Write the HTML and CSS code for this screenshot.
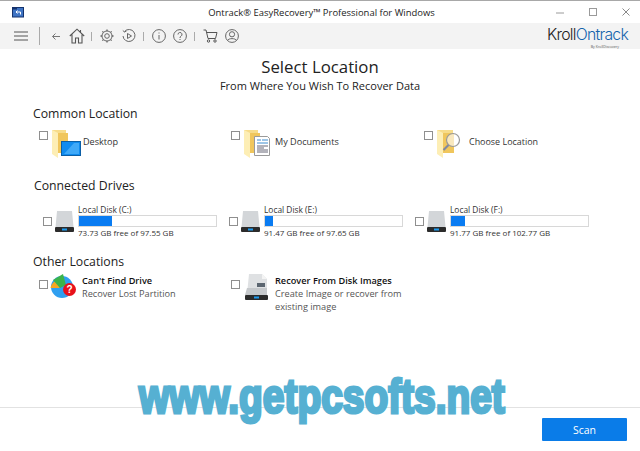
FILE: index.html
```html
<!DOCTYPE html>
<html lang="en">
<head>
<meta charset="utf-8">
<title>Ontrack EasyRecovery</title>
<link rel="stylesheet" href="styles.css">
</head>
<body>
<div class="app">
  <header class="titlebar">
    <svg class="appicon" width="12" height="12" viewBox="0 0 12 12"><rect x=".5" y="1.5" width="11" height="9.5" fill="#3f74c4" stroke="#14336e"/><path d="M1 1.5h4v2H1z" fill="#14336e"/><path d="M8.5 8.5V6H4M5.5 4.500 4 6l1.500 1.500" fill="none" stroke="#fff" stroke-width="1"/></svg>
    <div class="title">Ontrack® EasyRecovery™ Professional for Windows</div>
    <div class="winctl">
      <svg width="10" height="10" viewBox="0 0 10 10"><path d="M1 6h8" stroke="#9a9a9a"/></svg>
      <svg width="10" height="10" viewBox="0 0 10 10"><rect x="1.500" y="1.500" width="7" height="7" fill="none" stroke="#9a9a9a"/></svg>
      <svg width="10" height="10" viewBox="0 0 10 10"><path d="M1.500 1.500l7 7M8.500 1.500l-7 7" stroke="#8a8a8a" fill="none"/></svg>
    </div>
  </header>
  <nav class="toolbar">
    <svg class="tb menu" width="16" height="10" viewBox="0 0 16 10"><path d="M1 1h14M1 5h14M1 9h14" stroke="#555" stroke-width="1"/></svg>
    <span class="sep tall"></span>
    <svg class="tb back" width="10" height="9" viewBox="0 0 10 9"><path d="M9 4.500H1.500M4.500 1.500l-3 3 3 3" fill="none" stroke="#777"/></svg>
    <svg class="tb home" width="16" height="16" viewBox="0 0 16 16"><path d="M.8 8 8 1.200 15.200 8M3 6.500V15h3.500v-5h3v5H13V6.500M11.500 2v2.500" fill="none" stroke="#555" stroke-width="1.100"/></svg>
    <span class="sep"></span>
    <svg class="tb gear" width="14" height="14" viewBox="0 0 14 14"><circle cx="7" cy="7" r="2.300" fill="none" stroke="#666"/><circle cx="7" cy="7" r="5" fill="none" stroke="#666" stroke-width="1"/><path d="M7 .5v1.500M7 12v1.500M.5 7H2M12 7h1.500M2.400 2.400l1 1M10.600 10.600l1 1M2.400 11.600l1-1M10.600 3.400l1-1" stroke="#666" stroke-width="1.300"/></svg>
    <svg class="tb replay" width="14" height="14" viewBox="0 0 14 14"><path d="M2.500 2.500A6 6 0 1 1 1 7" fill="none" stroke="#666"/><path d="M.8 1.500l1.700 1.500L4.500 2" fill="none" stroke="#666"/><path d="M5.500 4.500 9.500 7l-4 2.500z" fill="none" stroke="#666"/></svg>
    <span class="sep"></span>
    <svg class="tb info" width="14" height="14" viewBox="0 0 14 14"><circle cx="7" cy="7" r="6.400" fill="none" stroke="#666"/><path d="M7 3.500v1M7 6v4.500" stroke="#666"/></svg>
    <svg class="tb help" width="14" height="14" viewBox="0 0 14 14"><circle cx="7" cy="7" r="6.400" fill="none" stroke="#666"/><path d="M5 5.500a2 2 0 1 1 3 1.700c-.8.500-1 .8-1 1.800M7 10v1" fill="none" stroke="#666"/></svg>
    <span class="sep"></span>
    <svg class="tb cart" width="15" height="14" viewBox="0 0 15 14"><path d="M.5 1H3l2 8.500h7.500L14 3.500H3.500" fill="none" stroke="#555"/><circle cx="5.500" cy="12" r="1.200" fill="none" stroke="#555"/><circle cx="12" cy="12" r="1.200" fill="none" stroke="#555"/></svg>
    <svg class="tb user" width="14" height="14" viewBox="0 0 14 14"><circle cx="7" cy="7" r="6.400" fill="none" stroke="#666"/><circle cx="7" cy="5.300" r="2.600" fill="none" stroke="#666"/><path d="M2.500 11.500c1-2.500 8-2.500 9 0" fill="none" stroke="#666"/></svg>
    <div class="brand">
      <div class="brandname"><span class="kroll">Kroll</span><span class="ontrack">Ontrack</span></div>
      <div class="byline">By KrollDiscovery</div>
    </div>
  </nav>
  <main class="content">
    <h1 class="heading">Select Location</h1>
    <p class="subheading">From Where You Wish To Recover Data</p>

    <h2 class="section common-title">Common Location</h2>
    <div class="grid common">
      <div class="loc">
        <span class="check"></span>
        <svg class="folder" width="30" height="29" viewBox="0 0 30 29"><path d="M0 1h14v23H0z" fill="#f7dc8a"/><path d="M0 1l6 3v25l-6-4z" fill="#fdeeb5"/><path d="M6 4h10v20H6z" fill="#f0c65c"/><rect x="9.500" y="12.500" width="19" height="14" fill="#0f8bef" stroke="#0c5fa5"/><path d="M12 25l10-11h5v11z" fill="#3fa9f8"/></svg>
        <span class="loclabel">Desktop</span>
      </div>
      <div class="loc">
        <span class="check"></span>
        <svg class="folder" width="30" height="29" viewBox="0 0 30 29"><path d="M0 1h14v23H0z" fill="#f7dc8a"/><path d="M0 1l6 3v25l-6-4z" fill="#fdeeb5"/><path d="M6 4h10v20H6z" fill="#f0c65c"/><path d="M10.500 7.500h13l2 2v17h-15z" fill="#fff" stroke="#9a9a9a"/><path d="M13 11h4M18 11h6M13 14h11" stroke="#3c8ccf"/><path d="M13 17h11M13 19h7M13 21h11M13 23h11" stroke="#667"/></svg>
        <span class="loclabel">My Documents</span>
      </div>
      <div class="loc">
        <span class="check"></span>
        <svg class="folder" width="30" height="29" viewBox="0 0 30 29"><path d="M0 1h16v23H0z" fill="#f7dc8a"/><path d="M0 1l6 3v25l-6-4z" fill="#fdeeb5"/><path d="M6 4h11v20H6z" fill="#f0c65c"/><circle cx="16" cy="11" r="6.500" fill="#fff" fill-opacity=".6" stroke="#9a9a9a" stroke-width="1.200"/><path d="M11.500 16 6.500 21" stroke="#8088a0" stroke-width="2.200"/></svg>
        <span class="loclabel wide">Choose Location</span>
      </div>
    </div>

    <h2 class="section drives-title">Connected Drives</h2>
    <div class="grid drives">
      <div class="drive">
        <span class="check"></span>
        <svg class="diskicon" width="19" height="21" viewBox="0 0 19 21"><path d="M2 0h15l1.500 16H.5z" fill="#d3d6d9"/><rect y="16" width="19" height="5" rx="1" fill="#2b2b2b"/><rect x="7" y="17.500" width="5" height="2" fill="#1d9bf0"/></svg>
        <div class="diskinfo">
          <div class="diskname">Local Disk (C:)</div>
          <div class="bar"><div class="fill" style="width:24%"></div></div>
          <div class="diskfree">73.73 GB free of 97.55 GB</div>
        </div>
      </div>
      <div class="drive">
        <span class="check"></span>
        <svg class="diskicon" width="19" height="21" viewBox="0 0 19 21"><path d="M2 0h15l1.500 16H.5z" fill="#d3d6d9"/><rect y="16" width="19" height="5" rx="1" fill="#2b2b2b"/><rect x="7" y="17.500" width="5" height="2" fill="#1d9bf0"/></svg>
        <div class="diskinfo">
          <div class="diskname">Local Disk (E:)</div>
          <div class="bar"><div class="fill" style="width:6%"></div></div>
          <div class="diskfree">91.47 GB free of 97.65 GB</div>
        </div>
      </div>
      <div class="drive">
        <span class="check"></span>
        <svg class="diskicon" width="19" height="21" viewBox="0 0 19 21"><path d="M2 0h15l1.500 16H.5z" fill="#d3d6d9"/><rect y="16" width="19" height="5" rx="1" fill="#2b2b2b"/><rect x="7" y="17.500" width="5" height="2" fill="#1d9bf0"/></svg>
        <div class="diskinfo">
          <div class="diskname">Local Disk (F:)</div>
          <div class="bar"><div class="fill" style="width:10%"></div></div>
          <div class="diskfree">91.77 GB free of 102.77 GB</div>
        </div>
      </div>
    </div>

    <h2 class="section other-title">Other Locations</h2>
    <div class="grid other">
      <div class="opt">
        <span class="check"></span>
        <svg class="opticon pie" width="27" height="26" viewBox="0 0 27 26"><circle cx="12" cy="13" r="11" fill="#2f9ff0"/><path d="M10 14H.5a10 10 0 0 1 5-7z" fill="#f6a623"/><path d="M3 6 13 0l3 11-6 3z" fill="#3bb34a"/><circle cx="19.500" cy="15.500" r="6.500" fill="#e8111b"/><text x="19.500" y="19" class="qmark" text-anchor="middle">?</text></svg>
        <div class="opttext">
          <div class="opttitle">Can't Find Drive</div>
          <div class="optdesc">Recover Lost Partition</div>
        </div>
      </div>
      <div class="opt">
        <span class="check"></span>
        <svg class="opticon" width="24" height="26" viewBox="0 0 24 26"><path d="M4 0h13l5 5v15H2z" fill="#dfe1e3"/><path d="M17 0v5h5z" fill="#f4f4f4"/><rect x="12" y="9" width="8" height="4" fill="#5c6670"/><path d="M2 14 0 21h22V14z" fill="#c6c9cc"/><rect y="21" width="23" height="5" rx="1" fill="#2b2b2b"/><rect x="9" y="22.500" width="5" height="2" fill="#1d9bf0"/></svg>
        <div class="opttext">
          <div class="opttitle">Recover From Disk Images</div>
          <div class="optdesc">Create Image or recover from<br>existing image</div>
        </div>
      </div>
    </div>
  </main>
  <footer class="footer">
    <button class="scan" type="button">Scan</button>
  </footer>
  <div class="watermark">www.getpcsofts.net</div>
</div>
</body>
</html>
```
FILE: styles.css
```css
* { box-sizing: border-box; }
html, body { margin: 0; height: 100%; }
body { background: #fff; font-family: "Open Sans", "Noto Sans", sans-serif; color: #333; overflow: hidden; }
.app { position: relative; width: 640px; height: 451px; display: flex; flex-direction: column; border-top: 1px solid #a8a8a8; }
.titlebar { height: 22px; display: grid; grid-template-columns: 1fr auto 1fr; align-items: center; padding: 0 9px 0 12px; flex: none; }
.appicon { flex: none; }
.title { text-align: center; font-size: 9.450px; color: #222; }
.winctl { display: flex; gap: 23px; justify-content: flex-end; }
.toolbar { height: 26px; flex: none; background: #f3f3f3; display: flex; align-items: center; padding: 0 12px 0 13px; }
.tb { flex: none; }
.sep { width: 1px; height: 9px; background: #aaa; flex: none; }
.sep.tall { height: 18px; margin: 0 11px 0 10px; }
.back { margin-right: 8px; }
.home + .sep { margin: 0 8px 0 6px; }
.gear + .replay { margin-left: 8px; }
.replay + .sep { margin: 0 8px 0 7px; }
.info + .help { margin-left: 7px; }
.help + .sep { margin: 0 8px 0 7px; }
.cart + .user { margin-left: 7px; }
.brand { margin-left: auto; align-self: flex-start; display: flex; flex-direction: column; align-items: flex-end; padding-top: 4px; }
.brandname { font-size: 15.800px; line-height: 15px; letter-spacing: -.75px; font-family: "Inter", sans-serif; font-weight: 300; }
.kroll { color: #222; }
.ontrack { color: #1464ad; }
.byline { font-size: 3.500px; line-height: 4px; color: #555; margin: 3px 9px 0 0; }
.content { flex: 1; min-height: 0; padding-top: 8px; }
.heading { margin: 0; text-align: center; font-size: 16.800px; font-weight: 400; line-height: 20px; color: #222; }
.subheading { margin: 1px 0 0; text-align: center; font-size: 11px; line-height: 16px; color: #222; }
.section { margin: 0 0 0 33px; font-size: 12.250px; font-weight: 400; line-height: 16px; color: #222; }
.common-title { margin-top: 12px; }
.drives-title { margin-top: 19px; margin-left: 34px; }
.other-title { margin-top: 16px; }
.grid { display: grid; }
.common { grid-template-columns: 192px 193px 1fr; padding-left: 39px; margin-top: 7px; height: 30px; }
.loc { display: flex; align-items: flex-start; }
.check { width: 9px; height: 9px; border: 1px solid #8f8f8f; background: #fff; flex: none; margin-top: 2px; }
.folder { margin-left: 4px; flex: none; }
.loclabel { font-size: 9.100px; line-height: 14px; margin: 6px 0 0 1px; color: #333; }
.loclabel.wide { margin-left: 2px; font-size: 8.950px; }
.drives { grid-template-columns: 186px 186px 1fr; padding-left: 43px; margin-top: 10px; }
.drive { display: flex; align-items: center; }
.drive .check { margin-top: 0; }
.diskicon { margin-left: 3px; flex: none; }
.diskinfo { margin-left: 4px; width: 139px; }
.diskname, .diskfree { font-size: 8.400px; line-height: 11px; color: #333; white-space: nowrap; }
.diskfree { font-size: 8px; }
.bar { height: 12px; border: 1px solid #d8d8d8; background: #fff; }
.fill { height: 100%; background: #0a7cf2; }
.other { grid-template-columns: 192px 1fr; padding-left: 39px; margin-top: 4px; }
.opt { display: flex; align-items: flex-start; }
.opt .check { margin-top: 6px; }
.opticon { margin-left: 4px; flex: none; }
.opticon + .opttext { margin-left: 3px; }
.opticon.pie { margin-left: 2px; margin-right: 2px; }
.opt:last-child .opticon { margin-left: 5px; margin-right: 3px; }
.opttitle { font-size: 9.200px; line-height: 13px; color: #111; font-weight: 600; }
.optdesc { font-size: 9.200px; line-height: 13px; color: #555; }
.qmark { font: 700 10px "Liberation Sans", sans-serif; fill: #fff; }
.footer { flex: none; height: 44px; border-top: 1px solid #e2e2e2; display: flex; justify-content: flex-end; align-items: flex-start; padding: 10px 13px 0 0; }
.scan { width: 85px; height: 23px; border: 0; border-radius: 1px; background: #0a7ce8; color: #fff; font: 400 10.500px "Open Sans", sans-serif; padding: 0; }
.watermark { position: absolute; left: 139px; top: 366px; font: 700 36px/46px "Liberation Sans", sans-serif; color: #56b0d2; -webkit-text-stroke: 2.300px #56b0d2; white-space: nowrap; transform-origin: left top; transform: scale(1.08, 1.32); }
```
